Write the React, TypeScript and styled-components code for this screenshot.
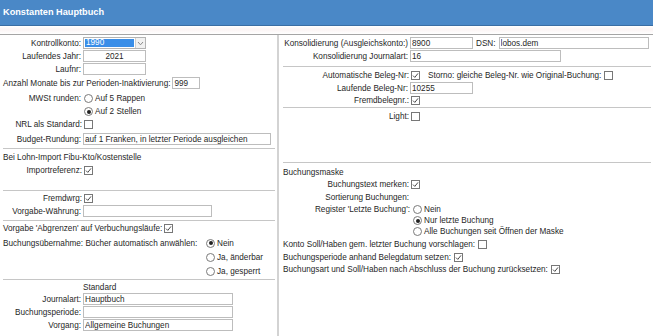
import React, { FC } from "react";
import styled, { createGlobalStyle } from "styled-components";

const GlobalStyle = createGlobalStyle`
  html, body {
    margin: 0;
    padding: 0;
    background: #ffffff;
  }
  body {
    font-family: "Liberation Sans", Arial, sans-serif;
    font-size: 8.2px;
    color: #1f1f1f;
  }
`;

const Page = styled.div`
  width: 653px;
  height: 336px;
  overflow: hidden;
  display: flex;
  flex-direction: column;
`;

const TitleBar = styled.div`
  height: 25px;
  flex-shrink: 0;
  background: #4a88c7;
  border-bottom: 1px solid #3a6da3;
  color: #ffffff;
  font-weight: 700;
  font-size: 9.2px;
  line-height: 25px;
  padding-left: 3px;
`;

const Strip = styled.div`
  height: 8px;
  flex-shrink: 0;
  background: linear-gradient(#ffffff, #fbf3f3 40%, #ffffff);
  border-bottom: 1px solid #a5a5a5;
`;

const Body = styled.div`
  flex: 1;
  display: grid;
  grid-template-columns: 277px 1fr;
`;

const Panel = styled.div<{ $pad: number; $divider?: boolean }>`
  display: flex;
  flex-direction: column;
  padding: 2px 0 0 ${(p) => p.$pad}px;
  border-left: ${(p) => (p.$divider ? "2px solid #d3d3d3" : "none")};
  min-width: 0;
`;

const Row = styled.div<{ $h?: number; $mt?: number }>`
  display: flex;
  align-items: center;
  height: ${(p) => p.$h ?? 12}px;
  margin-top: ${(p) => p.$mt ?? 0}px;
  white-space: nowrap;
`;

const Label = styled.span<{ $w?: number; $pl?: number }>`
  display: inline-block;
  width: ${(p) => (p.$w ? `${p.$w}px` : "auto")};
  box-sizing: border-box;
  text-align: right;
  padding-left: ${(p) => p.$pl ?? 0}px;
  padding-right: ${(p) => (p.$pl ? 3 : 2)}px;
  flex-shrink: 0;
`;

const Text = styled.span<{ $ml?: number }>`
  margin-left: ${(p) => p.$ml ?? 0}px;
`;

const Field = styled.input<{ $w: number; $center?: boolean }>`
  width: ${(p) => p.$w}px;
  height: 12px;
  box-sizing: border-box;
  border: 1px solid #bdbdbd;
  padding: 0 1px;
  margin: 0;
  font: inherit;
  color: #1f1f1f;
  background: #ffffff;
  text-align: ${(p) => (p.$center ? "center" : "left")};
  outline: none;
`;

const SelectBox = styled.div`
  width: 63px;
  height: 12px;
  box-sizing: border-box;
  border: 1px solid #b3b3b3;
  display: flex;
`;

const SelectValue = styled.div`
  flex: 1;
  margin: 1px;
  background: #3a8ee8;
  color: #ffffff;
  line-height: 8px;
  padding-left: 1px;
`;

const SelectButton = styled.div`
  width: 9px;
  background: #f1f1f1;
  border-left: 1px solid #d0d0d0;
  display: flex;
  align-items: center;
  justify-content: center;
`;

const Box = styled.span<{ $ml?: number }>`
  width: 9px;
  height: 9px;
  box-sizing: border-box;
  border: 1px solid #777777;
  background: #ffffff;
  margin-left: ${(p) => p.$ml ?? 0}px;
  display: inline-flex;
  align-items: center;
  justify-content: center;
  flex-shrink: 0;
`;

const Circle = styled.span`
  width: 9px;
  height: 9px;
  box-sizing: border-box;
  border: 1px solid #7a7a7a;
  border-radius: 50%;
  background: #ffffff;
  margin-right: 2px;
  display: inline-flex;
  align-items: center;
  justify-content: center;
  flex-shrink: 0;
`;

const Dot = styled.span`
  width: 4px;
  height: 4px;
  border-radius: 50%;
  background: #222222;
`;

const OptionField = styled.div<{ $mt?: number }>`
  display: flex;
  align-items: flex-start;
  margin-top: ${(p) => p.$mt ?? 0}px;
  white-space: nowrap;
`;

const Options = styled.div`
  display: flex;
  flex-direction: column;
`;

const Option = styled.div<{ $h: number }>`
  display: flex;
  align-items: center;
  height: ${(p) => p.$h}px;
  padding-left: 1px;
`;

const OptionLabel = styled.div<{ $w?: number; $h: number; $left?: boolean }>`
  width: ${(p) => (p.$w ? `${p.$w}px` : "auto")};
  box-sizing: border-box;
  padding-right: 2px;
  height: ${(p) => p.$h}px;
  display: flex;
  align-items: center;
  justify-content: ${(p) => (p.$left ? "flex-start" : "flex-end")};
  flex-shrink: 0;
`;

const Divider = styled.div<{ $mt: number }>`
  height: 1px;
  background: #c6c6c6;
  margin-top: ${(p) => p.$mt}px;
  margin-right: 2px;
  flex-shrink: 0;
`;

const Check: FC<{ checked?: boolean; ml?: number }> = ({ checked, ml }) => (
  <Box $ml={ml}>
    {checked && (
      <svg width="7" height="7" viewBox="0 0 7 7">
        <polyline points="1,3.6 2.8,5.4 6,1.4" fill="none" stroke="#4a4a4a" strokeWidth="1" />
      </svg>
    )}
  </Box>
);

const Radio: FC<{ checked?: boolean; label: string; h: number }> = ({ checked, label, h }) => (
  <Option $h={h}>
    <Circle>{checked && <Dot />}</Circle>
    {label}
  </Option>
);

const Select: FC<{ value: string }> = ({ value }) => (
  <SelectBox>
    <SelectValue>{value}</SelectValue>
    <SelectButton>
      <svg width="7" height="5" viewBox="0 0 7 5">
        <polyline points="1,1 3.5,3.8 6,1" fill="none" stroke="#8a8a8a" strokeWidth="1" />
      </svg>
    </SelectButton>
  </SelectBox>
);

const LeftPanel: FC = () => (
  <Panel $pad={3}>
    <Row>
      <Label $w={80}>Kontrollkonto:</Label>
      <Select value="1990" />
    </Row>
    <Row $mt={1}>
      <Label $w={80}>Laufendes Jahr:</Label>
      <Field $w={63} $center readOnly value="2021" />
    </Row>
    <Row $mt={1}>
      <Label $w={80}>Laufnr:</Label>
      <Field $w={63} readOnly value="" />
    </Row>
    <Row $mt={2}>
      <Label>Anzahl Monate bis zur Perioden-Inaktivierung:</Label>
      <Field $w={28} readOnly value="999" />
    </Row>
    <OptionField $mt={3}>
      <OptionLabel $w={80} $h={13}>MWSt runden:</OptionLabel>
      <Options>
        <Radio h={13} label="Auf 5 Rappen" />
        <Radio h={13} checked label="Auf 2 Stellen" />
      </Options>
    </OptionField>
    <Row $h={13}>
      <Label $w={81}>NRL als Standard:</Label>
      <Check />
    </Row>
    <Row $mt={2}>
      <Label $w={80}>Budget-Rundung:</Label>
      <Field $w={188} readOnly value="auf 1 Franken, in letzter Periode ausgleichen" />
    </Row>
    <Divider $mt={3} />
    <Row $mt={2}>
      <Text>Bei Lohn-Import Fibu-Kto/Kostenstelle</Text>
    </Row>
    <Row $mt={1}>
      <Label $w={81}>Importreferenz:</Label>
      <Check checked />
    </Row>
    <Divider $mt={14} />
    <Row $mt={1}>
      <Label $w={81}>Fremdwrg:</Label>
      <Check checked />
    </Row>
    <Row $mt={1}>
      <Label $w={80}>Vorgabe-Währung:</Label>
      <Field $w={129} readOnly value="" />
    </Row>
    <Divider $mt={3} />
    <Row $mt={1}>
      <Text>Vorgabe 'Abgrenzen' auf Verbuchungsläufe:</Text>
      <Check checked ml={2} />
    </Row>
    <OptionField $mt={2}>
      <OptionLabel $w={202} $h={14} $left>Buchungsübernahme: Bücher automatisch anwählen:</OptionLabel>
      <Options>
        <Radio h={14} checked label="Nein" />
        <Radio h={14} label="Ja, änderbar" />
        <Radio h={14} label="Ja, gesperrt" />
      </Options>
    </OptionField>
    <Divider $mt={1} />
    <Row $mt={1}>
      <Label $w={80} />
      <Text>Standard</Text>
    </Row>
    <Row>
      <Label $w={80}>Journalart:</Label>
      <Field $w={150} readOnly value="Hauptbuch" />
    </Row>
    <Row $mt={1}>
      <Label $w={80}>Buchungsperiode:</Label>
      <Field $w={150} readOnly value="" />
    </Row>
    <Row $mt={1}>
      <Label $w={80}>Vorgang:</Label>
      <Field $w={150} readOnly value="Allgemeine Buchungen" />
    </Row>
  </Panel>
);

const RightPanel: FC = () => (
  <Panel $pad={4} $divider>
    <Row>
      <Label $w={127}>Konsolidierung (Ausgleichskonto:)</Label>
      <Field $w={63} readOnly value="8900" />
      <Label $pl={3}>DSN:</Label>
      <Field $w={150} readOnly value="lobos.dem" />
    </Row>
    <Row $mt={1}>
      <Label $w={127}>Konsolidierung Journalart:</Label>
      <Field $w={151} readOnly value="16" />
    </Row>
    <Divider $mt={4} />
    <Row $mt={2}>
      <Label $w={128}>Automatische Beleg-Nr:</Label>
      <Check checked />
      <Text $ml={8}>Storno: gleiche Beleg-Nr. wie Original-Buchung:</Text>
      <Check ml={3} />
    </Row>
    <Row $mt={1}>
      <Label $w={127}>Laufende Beleg-Nr:</Label>
      <Field $w={63} readOnly value="10255" />
    </Row>
    <Row>
      <Label $w={128}>Fremdbelegnr.:</Label>
      <Check checked />
    </Row>
    <Divider $mt={1} />
    <Row $mt={2}>
      <Label $w={128}>Light:</Label>
      <Check />
    </Row>
    <Divider $mt={40} />
    <Row $mt={3}>
      <Text>Buchungsmaske</Text>
    </Row>
    <Row>
      <Label $w={128}>Buchungstext merken:</Label>
      <Check checked />
    </Row>
    <Row $mt={1}>
      <Label $w={128}>Sortierung Buchungen:</Label>
    </Row>
    <OptionField $mt={1}>
      <OptionLabel $w={129} $h={11}>Register 'Letzte Buchung':</OptionLabel>
      <Options>
        <Radio h={11} label="Nein" />
        <Radio h={11} checked label="Nur letzte Buchung" />
        <Radio h={11} label="Alle Buchungen seit Öffnen der Maske" />
      </Options>
    </OptionField>
    <Row $mt={1}>
      <Text>Konto Soll/Haben gem. letzter Buchung vorschlagen:</Text>
      <Check ml={3} />
    </Row>
    <Row $mt={1}>
      <Text>Buchungsperiode anhand Belegdatum setzen:</Text>
      <Check checked ml={3} />
    </Row>
    <Row>
      <Text>Buchungsart und Soll/Haben nach Abschluss der Buchung zurücksetzen:</Text>
      <Check checked ml={3} />
    </Row>
  </Panel>
);

const App: FC = () => (
  <>
    <GlobalStyle />
    <Page>
      <TitleBar>Konstanten Hauptbuch</TitleBar>
      <Strip />
      <Body>
        <LeftPanel />
        <RightPanel />
      </Body>
    </Page>
  </>
);

export default App;
